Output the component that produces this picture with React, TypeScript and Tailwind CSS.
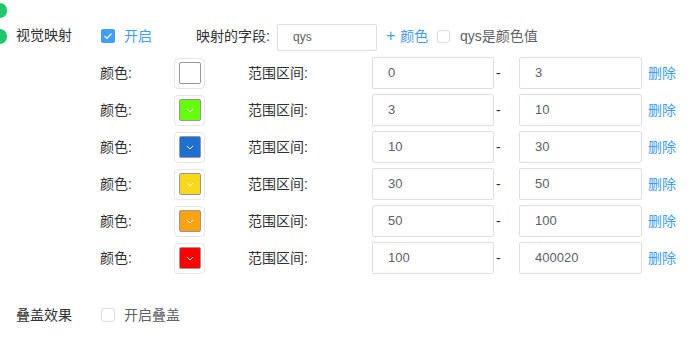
import React from "react";

const rows = [
  { color: "#ffffff", from: "0", to: "3", empty: true },
  { color: "#66ff0a", from: "3", to: "10" },
  { color: "#1e6fd0", from: "10", to: "30" },
  { color: "#f7d81a", from: "30", to: "50" },
  { color: "#ffa20f", from: "50", to: "100" },
  { color: "#ff0000", from: "100", to: "400020" },
];

function Chevron() {
  return (
    <svg width="8" height="5" viewBox="0 0 8 5" fill="none">
      <path d="M1 1l3 3 3-3" stroke="#ffffff" strokeWidth="1" />
    </svg>
  );
}

export default function App() {
  return (
    <div
      className="w-[691px] h-[349px] bg-white text-[14px] text-[#303133] overflow-hidden"
      style={{ fontFamily: '"Liberation Sans", "Noto Sans CJK SC", sans-serif' }}
    >
      <div className="h-[22px] pt-[3px]">
        <div className="w-[7px] h-[15px] rounded-r-full bg-[#1fc86c]" />
      </div>
      <div className="flex h-[28px] items-center">
        <div className="w-[16px] h-[28px] flex items-center">
          <div className="w-[7px] h-[15px] rounded-r-full bg-[#1fc86c]" />
        </div>
        <div className="w-[84px] leading-none -mt-[3px]">视觉映射</div>
        <div className="ml-[1px] w-[14px] h-[14px] rounded-[2px] bg-[#409eff] flex items-center justify-center">
          <svg width="10" height="8" viewBox="0 0 10 8" fill="none">
            <path d="M1.5 4l2.5 2.5 4.5-5" stroke="#fff" strokeWidth="1.2" />
          </svg>
        </div>
        <div className="ml-[9px] w-[72px] text-[#409eff] leading-none">开启</div>
        <div className="w-[81px] leading-none">映射的字段:</div>
        <div className="w-[100px] h-[27px] mt-[2px] border border-[#dcdfe6] rounded-[2px] flex items-center pl-[15px] text-[12px] text-[#606266]">
          qys
        </div>
        <div className="ml-[9px] w-[51px] text-[#409eff] flex items-center leading-none">
          <span className="text-[16px] mr-[5px] font-light">+</span>颜色
        </div>
        <div className="w-[13px] h-[13px] border border-[#dcdfe6] rounded-[2px]" />
        <div className="ml-[10px] text-[#606266] leading-none">qys是颜色值</div>
      </div>
      <div className="mt-[7px] flex flex-col gap-[5px]">
        {rows.map((r, i) => (
          <div key={i} className="flex items-center h-[32px]">
            <div className="w-[100px]" />
            <div className="w-[74px] leading-none">颜色:</div>
            <div className="w-[74px]">
              <div className="w-[31px] h-[31px] border border-[#e6e6e6] rounded-[4px] flex items-center justify-center">
                <div
                  className="w-[22px] h-[22px] border border-[#999999] rounded-[2px] flex items-center justify-center"
                  style={{ backgroundColor: r.color }}
                >
                  {!r.empty && <Chevron />}
                </div>
              </div>
            </div>
            <div className="w-[124px] leading-none">范围区间:</div>
            <div className="w-[122px] h-[32px] border border-[#dcdfe6] rounded-[2px] flex items-center pl-[15px] text-[13px] text-[#606266]">
              {r.from}
            </div>
            <div className="w-[25px] pl-[2px] leading-none">-</div>
            <div className="w-[123px] h-[32px] border border-[#dcdfe6] rounded-[2px] flex items-center pl-[15px] text-[13px] text-[#606266]">
              {r.to}
            </div>
            <div className="ml-[6px] text-[#409eff] leading-none">删除</div>
          </div>
        ))}
      </div>
      <div className="mt-[34px] flex items-center h-[14px]">
        <div className="w-[16px]" />
        <div className="w-[85px] leading-none">叠盖效果</div>
        <div className="w-[14px] h-[14px] border border-[#dcdfe6] rounded-[2px]" />
        <div className="ml-[9px] text-[#606266] leading-none">开启叠盖</div>
      </div>
    </div>
  );
}
